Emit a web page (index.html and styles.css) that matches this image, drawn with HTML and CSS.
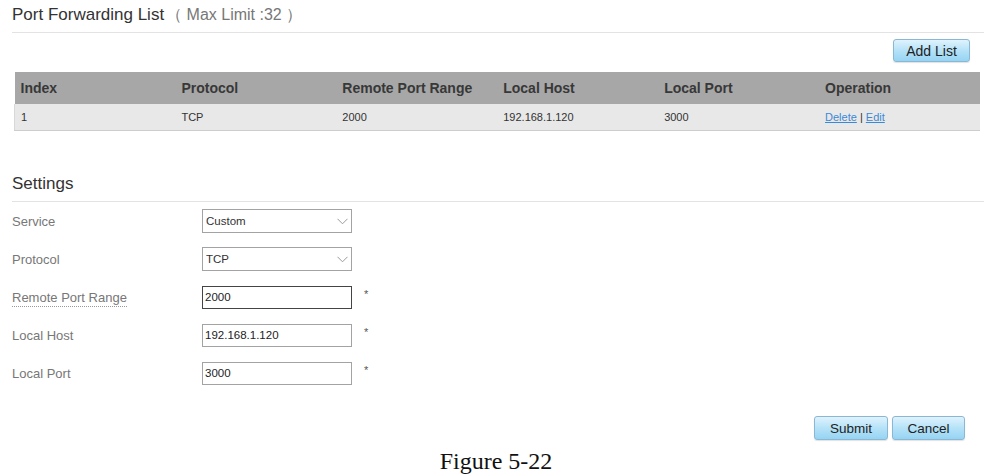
FILE: index.html
```html
<!DOCTYPE html>
<html>
<head>
<meta charset="utf-8">
<link rel="stylesheet" href="styles.css">
</head>
<body>
<div class="page">
  <div class="section-head first">
    <span class="title">Port Forwarding List</span><span class="limit">（ Max Limit :32 ）</span>
  </div>
  <div class="toolbar">
    <button class="btn add">Add List</button>
  </div>
  <table class="list">
    <thead>
      <tr><th>Index</th><th>Protocol</th><th>Remote Port Range</th><th>Local Host</th><th>Local Port</th><th>Operation</th></tr>
    </thead>
    <tbody>
      <tr><td>1</td><td>TCP</td><td>2000</td><td>192.168.1.120</td><td>3000</td><td><a href="#">Delete</a> | <a href="#">Edit</a></td></tr>
    </tbody>
  </table>

  <div class="section-head settings">
    <span class="title">Settings</span>
  </div>
  <div class="form">
    <div class="row">
      <span class="label">Service</span>
      <div class="select"><span>Custom</span><svg width="11" height="7" viewBox="0 0 11 7"><path d="M0.5 0.8 L5.5 5.8 L10.5 0.8" fill="none" stroke="#9a9a9a" stroke-width="1"/></svg></div>
    </div>
    <div class="row">
      <span class="label">Protocol</span>
      <div class="select"><span>TCP</span><svg width="11" height="7" viewBox="0 0 11 7"><path d="M0.5 0.8 L5.5 5.8 L10.5 0.8" fill="none" stroke="#9a9a9a" stroke-width="1"/></svg></div>
    </div>
    <div class="row">
      <span class="label"><span class="dotted">Remote Port Range</span></span>
      <div class="input focus">2000</div><span class="req">*</span>
    </div>
    <div class="row">
      <span class="label">Local Host</span>
      <div class="input">192.168.1.120</div><span class="req">*</span>
    </div>
    <div class="row">
      <span class="label">Local Port</span>
      <div class="input">3000</div><span class="req">*</span>
    </div>
  </div>
  <div class="actions">
    <button class="btn submit">Submit</button>
    <button class="btn cancel">Cancel</button>
  </div>
</div>
<div class="caption">Figure 5-22</div>
</body>
</html>
```
FILE: styles.css
```css
html, body {
  margin: 0;
  padding: 0;
  background: #fff;
}
body {
  width: 984px;
  height: 476px;
  overflow: hidden;
  font-family: "Liberation Sans", Arial, sans-serif;
  color: #333;
}
.page {
  padding-left: 12px;
}
.section-head {
  border-bottom: 1px solid #e3e3e3;
  height: 20px;
  line-height: 20px;
  padding-bottom: 7px;
}
.section-head.first {
  padding-top: 5px;
}
.section-head.settings {
  margin-top: 43px;
}
.title {
  font-size: 17px;
  color: #333;
}
.limit {
  font-size: 16px;
  color: #777;
  margin-left: 2px;
  white-space: pre;
}
.toolbar {
  display: flex;
  justify-content: flex-end;
  padding-right: 14px;
  margin-top: 6px;
}
.btn {
  font-family: "Liberation Sans", Arial, sans-serif;
  font-size: 14px;
  color: #222;
  border: 1px solid #8ab7d3;
  border-radius: 3px;
  background: linear-gradient(#dff3fd, #b5e2f8 50%, #96d4f3);
  box-shadow: 0 1px 1px rgba(0,0,0,0.12);
  padding: 0;
  margin: 0;
}
.btn.add {
  width: 77px;
  height: 23px;
}
table.list {
  margin-top: 10px;
  margin-left: 2px;
  width: 966px;
  border-collapse: collapse;
  table-layout: fixed;
}
table.list th {
  background: #a7a7a7;
  height: 32px;
  padding: 0 0 0 6px;
  text-align: left;
  font-size: 14px;
  font-weight: bold;
  color: #383838;
}
table.list td {
  background: #e8e8e8;
  height: 26px;
  padding: 0 0 0 6px;
  font-size: 11px;
  color: #333;
  border-bottom: 1px solid #cdcdcd;
}
table.list td:first-child {
  border-left: 1px solid #d8d8d8;
}
table.list a {
  color: #3b88d6;
  text-decoration: underline;
}
.form {
  display: flex;
  flex-direction: column;
}
.row {
  display: flex;
  align-items: center;
  height: 38px;
}
.label {
  flex: none;
  width: 190px;
  font-size: 13px;
  color: #777;
}
.dotted {
  border-bottom: 1px dotted #999;
  padding-bottom: 1px;
}
.select {
  box-sizing: border-box;
  width: 150px;
  height: 24px;
  border: 1px solid #a3a3a3;
  display: flex;
  align-items: center;
  justify-content: space-between;
  padding: 0 3px 0 3px;
  font-size: 11.5px;
  color: #333;
}
.input {
  box-sizing: border-box;
  width: 150px;
  height: 23px;
  border: 1px solid #a3a3a3;
  display: flex;
  align-items: center;
  padding-left: 2px;
  font-size: 11.5px;
  color: #222;
}
.input.focus {
  border-color: #444;
}
.req {
  margin-left: 12px;
  font-size: 11px;
  color: #555;
  margin-top: -6px;
}
.actions {
  display: flex;
  justify-content: flex-end;
  gap: 4px;
  padding-right: 19px;
  margin-top: 24px;
}
.btn.submit {
  width: 74px;
  height: 24px;
  font-size: 13.5px;
}
.btn.cancel {
  width: 73px;
  height: 24px;
  font-size: 13.5px;
}
.caption {
  margin-top: 7px;
  text-align: center;
  padding-left: 8px;
  font-family: "Liberation Serif", "Times New Roman", serif;
  font-size: 24px;
  line-height: 28px;
  color: #111;
}
```
